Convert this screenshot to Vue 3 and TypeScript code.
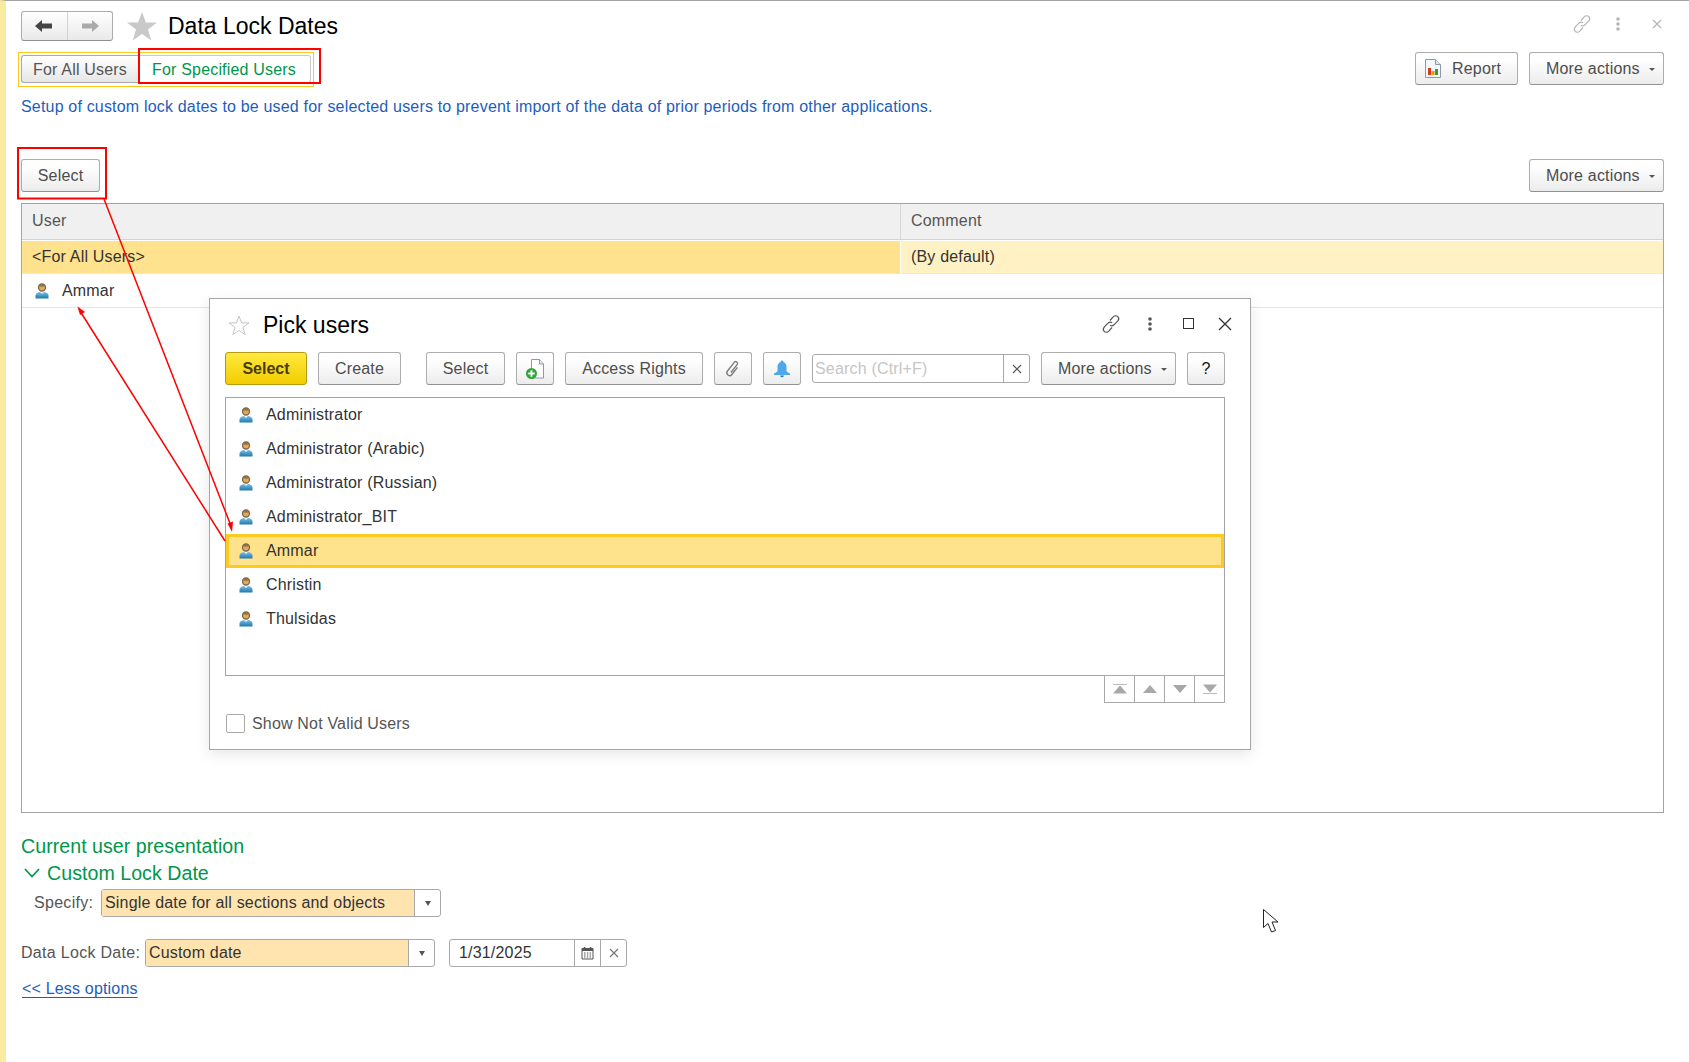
<template>
  <div class="page">
    <svg class="sprites" width="0" height="0">
      <defs>
        <linearGradient id="shoulder" x1="0" y1="0" x2="0" y2="1">
          <stop offset="0" stop-color="#7cc0e4" />
          <stop offset="1" stop-color="#1f78ac" />
        </linearGradient>
        <symbol id="user" viewBox="0 0 14 16">
          <path d="M0.500 15.500v-3c0-2 2-3 4-3.600h5c2 .6 4 1.600 4 3.600v3z" fill="url(#shoulder)" />
          <path d="M4.800 8.800L7 11l2.200-2.200z" fill="#f2f7fa" />
          <circle cx="7" cy="4.500" r="3.500" fill="#eda650" stroke="#74684c" stroke-width="1.300" />
          <path d="M4.200 3.200c1-1.300 4.600-1.300 5.600 0-1.600.5-4 .5-5.600 0z" fill="#6d6046" />
        </symbol>
        <symbol id="link" viewBox="0 0 20 20">
          <g fill="none" stroke="currentColor" stroke-width="1.200">
            <path d="M9 6.500l3.200-3.600c1.400-1.400 3.400-1.500 4.600-.3s1.100 3.100-.2 4.500l-3.600 3.700c-1.300 1.200-3 1.300-4.100.3" />
            <path d="M11 13.500l-3.200 3.600c-1.400 1.400-3.400 1.500-4.600.3s-1.100-3.100.2-4.500l3.600-3.700c1.300-1.200 3-1.300 4.100-.3" />
          </g>
        </symbol>
        <symbol id="dots" viewBox="0 0 8 14">
          <circle cx="4" cy="2" r="1.800" fill="currentColor" />
          <circle cx="4" cy="7" r="1.800" fill="currentColor" />
          <circle cx="4" cy="12" r="1.800" fill="currentColor" />
        </symbol>
      </defs>
    </svg>

    <header class="head">
      <div class="nav">
        <button class="nav-btn">
          <svg width="18" height="14" viewBox="0 0 18 14"><path d="M0 7l7-6v3.500h10v5H7V13z" fill="#444" /></svg>
        </button>
        <button class="nav-btn">
          <svg width="18" height="14" viewBox="0 0 18 14"><path d="M18 7l-7-6v3.500H1v5h10V13z" fill="#aaa" /></svg>
        </button>
      </div>
      <svg class="big-star" width="30" height="29" viewBox="0 0 30 29">
        <path d="M15 0l3.900 10.600H30l-9 6.800 3.300 11.200L15 22l-9.300 6.600L9 17.400 0 10.600h11.100z" fill="#c9c9c9" />
      </svg>
      <h1 class="title">Data Lock Dates</h1>
      <div class="head-icons">
        <svg class="ico-link" width="20" height="20"><use href="#link" /></svg>
        <svg class="ico-dots" width="8" height="14"><use href="#dots" /></svg>
        <svg class="ico-x" width="10" height="10" viewBox="0 0 10 10">
          <path d="M1 1l8 8M9 1l-8 8" stroke="#b5b5b5" stroke-width="1.300" />
        </svg>
      </div>
    </header>

    <div class="tab-row">
      <div class="tabs">
        <div class="tab">For All Users</div>
        <div class="tab active">For Specified Users</div>
      </div>
      <div class="right-btns">
        <button class="btn report">
          <svg width="16" height="19" viewBox="0 0 16 19">
            <path d="M.5.5h10l5 5v13H.5z" fill="#f4f7f9" stroke="#8b9aa8" />
            <path d="M10.500.5v5h5" fill="#dfe6ea" stroke="#8b9aa8" />
            <rect x="3" y="9" width="3" height="7" fill="#d9381e" />
            <rect x="6.500" y="12" width="3" height="4" fill="#e09a20" />
            <rect x="10" y="10" width="3" height="6" fill="#3a9a2e" />
          </svg>
          <span>Report</span>
        </button>
        <button class="btn more">More actions<i class="caret"></i></button>
      </div>
    </div>

    <p class="desc">
      Setup of custom lock dates to be used for selected users to prevent import of the data of prior periods from other applications.
    </p>

    <div class="cmd-row">
      <button class="btn select-main">Select</button>
      <button class="btn more">More actions<i class="caret"></i></button>
    </div>

    <div class="table">
      <div class="t-row t-head">
        <div class="cell c1">User</div>
        <div class="cell">Comment</div>
      </div>
      <div class="t-row t-sel">
        <div class="cell c1">&lt;For All Users&gt;</div>
        <div class="cell">(By default)</div>
      </div>
      <div class="t-row t-plain">
        <div class="cell c1 user-cell">
          <svg class="user-ico" width="14" height="16"><use href="#user" /></svg>
          Ammar
        </div>
        <div class="cell"></div>
      </div>
    </div>

    <h2 class="green-head">Current user presentation</h2>
    <div class="group-head">
      <svg width="16" height="10" viewBox="0 0 16 10">
        <path d="M1 1l7 7.500L15 1" fill="none" stroke="#00944a" stroke-width="1.600" />
      </svg>
      <span>Custom Lock Date</span>
    </div>

    <div class="form-row specify">
      <label>Specify:</label>
      <div class="combo wide">
        <div class="combo-val">Single date for all sections and objects</div>
        <div class="combo-btn"><i class="caret dark"></i></div>
      </div>
    </div>

    <div class="form-row lock">
      <label>Data Lock Date:</label>
      <div class="combo narrow">
        <div class="combo-val">Custom date</div>
        <div class="combo-btn"><i class="caret dark"></i></div>
      </div>
      <div class="combo date">
        <div class="date-val">1/31/2025</div>
        <div class="combo-btn">
          <svg width="13" height="14" viewBox="0 0 13 14">
            <path d="M1 2.500h11V13H1z" fill="#fff" stroke="#555" />
            <path d="M1 2h11v3H1z" fill="#555" />
            <path d="M3.500 1v2M9.500 1v2" stroke="#555" stroke-width="1.500" />
            <path d="M3 7h1.500M5.800 7h1.500M8.600 7h1.500M3 9h1.500M5.800 9h1.500M8.600 9h1.500M3 11h1.500M5.800 11h1.500M8.600 11h1.500" stroke="#555" />
          </svg>
        </div>
        <div class="combo-btn">
          <svg width="10" height="10" viewBox="0 0 10 10"><path d="M1 1l8 8M9 1l-8 8" stroke="#777" stroke-width="1.200" /></svg>
        </div>
      </div>
    </div>

    <a class="less">&lt;&lt; Less options</a>

    <section class="dialog">
      <div class="dlg-title">
        <svg width="22" height="21" viewBox="0 0 22 21">
          <path d="M11 1l2.600 6.900H21l-6 4.500 2.200 7.300L11 15.400 4.800 19.700 7 12.400 1 7.900h7.400z" fill="#fff" stroke="#c4c4c4" />
        </svg>
        <span class="dlg-name">Pick users</span>
        <div class="dlg-icons">
          <svg class="d-link" width="20" height="20"><use href="#link" /></svg>
          <svg class="d-dots" width="8" height="14"><use href="#dots" /></svg>
          <span class="d-max"></span>
          <svg width="14" height="14" viewBox="0 0 14 14">
            <path d="M1 1l12 12M13 1L1 13" stroke="#333" stroke-width="1.300" />
          </svg>
        </div>
      </div>

      <div class="toolbar">
        <button class="btn primary">Select</button>
        <button class="btn create">Create</button>
        <button class="btn gap-left">Select</button>
        <button class="btn square">
          <svg width="20" height="22" viewBox="0 0 20 22">
            <path d="M6.500 1.500h8l4 4.500v14h-12z" fill="#fff" stroke="#8b9aa8" />
            <path d="M14.500 1.500V6h4" fill="#e4eaee" stroke="#8b9aa8" />
            <circle cx="6.500" cy="15.500" r="5.500" fill="#2fa63c" />
            <path d="M6.500 12.300v6.400M3.300 15.500h6.400" stroke="#fff" stroke-width="1.900" />
          </svg>
        </button>
        <button class="btn rights">Access Rights</button>
        <button class="btn square">
          <svg width="18" height="20" viewBox="0 0 18 20">
            <path transform="rotate(38 9 10)" d="M11.500 6v9a2.800 2.800 0 0 1-5.600 0V4a1.800 1.800 0 0 1 3.600 0v10" fill="none" stroke="#7d7d7d" stroke-width="1.400" />
          </svg>
        </button>
        <button class="btn square">
          <svg width="18" height="20" viewBox="0 0 18 20">
            <path d="M9 1.500c.9 0 1.400.6 1.400 1.400 2.200.7 3.100 2.600 3.100 5.100v3.500c0 1.300 1 2 3.500 3V16H1v-1.500c2.500-1 3.500-1.700 3.500-3V8c0-2.500.9-4.400 3.100-5.100 0-.8.5-1.400 1.400-1.400z" fill="#4ea8ea" />
            <path d="M7 16.500c.3 1.200 1 1.800 2 1.800s1.700-.6 2-1.800z" fill="#2e78b0" />
          </svg>
        </button>
        <div class="search">
          <div class="search-text">Search (Ctrl+F)</div>
          <div class="search-x">
            <svg width="10" height="10" viewBox="0 0 10 10"><path d="M1 1l8 8M9 1l-8 8" stroke="#555" stroke-width="1.200" /></svg>
          </div>
        </div>
        <button class="btn more tb-more">More actions<i class="caret"></i></button>
        <button class="btn help">?</button>
      </div>

      <ul class="list">
        <li v-for="name in users" :key="name" :class="{ picked: name === picked }">
          <svg class="user-ico" width="14" height="16"><use href="#user" /></svg>
          {{ name }}
        </li>
      </ul>

      <div class="pager">
        <div class="pg">
          <svg width="14" height="10" viewBox="0 0 14 10"><path d="M0 .5h14" stroke="#bbb" /><path d="M7 1.500L14 9.500H0z" fill="#a8a8a8" /></svg>
        </div>
        <div class="pg">
          <svg width="14" height="8" viewBox="0 0 14 8"><path d="M7 0l7 8H0z" fill="#a8a8a8" /></svg>
        </div>
        <div class="pg">
          <svg width="14" height="8" viewBox="0 0 14 8"><path d="M7 8l7-8H0z" fill="#a8a8a8" /></svg>
        </div>
        <div class="pg">
          <svg width="14" height="10" viewBox="0 0 14 10"><path d="M0 9.500h14" stroke="#bbb" /><path d="M7 8.500L14 .5H0z" fill="#a8a8a8" /></svg>
        </div>
      </div>

      <div class="check-row">
        <span class="check"></span>
        <span>Show Not Valid Users</span>
      </div>
    </section>

    <!-- red marks somebody drew on top of the screenshot -->
    <svg class="marks" width="1689" height="1062" viewBox="0 0 1689 1062">
      <rect x="18.500" y="52.500" width="295" height="34" fill="none" stroke="#fcc81e" stroke-width="1" />
      <rect x="139" y="49" width="181" height="34" fill="none" stroke="#f00" stroke-width="2" />
      <rect x="18" y="148" width="88" height="50.500" fill="none" stroke="#f00" stroke-width="2" />
      <path d="M104 199L231 526" stroke="#f00" stroke-width="1.500" />
      <path d="M232 532l-4.500-8.500 5.500-2z" fill="#f00" />
      <path d="M225 541L80 311" stroke="#f00" stroke-width="1.500" />
      <path d="M77.500 306.500l7.500 5.500-5 3z" fill="#f00" />
      <path d="M1263.500 909.500v18l4.500-4 3.500 8.500 4-1.500-3.500-8.500h6z" fill="#fff" stroke="#222" />
    </svg>
  </div>
</template>

<script setup lang="ts">
const users: string[] = [
  "Administrator",
  "Administrator (Arabic)",
  "Administrator (Russian)",
  "Administrator_BIT",
  "Ammar",
  "Christin",
  "Thulsidas",
];
const picked = "Ammar";
</script>

<style>
html,
body {
  margin: 0;
  background: #fff;
}
</style>

<style scoped>
.page {
  position: relative;
  box-sizing: border-box;
  width: 1689px;
  height: 1062px;
  overflow: hidden;
  padding: 10px 25px 0 15px;
  background: #fff;
  border-top: 1px solid #a3a3a3;
  border-left: 6px solid #f9eb9f;
  font-family: "Liberation Sans", Arial, sans-serif;
  font-size: 16px;
  letter-spacing: 0.18px;
  color: #333;
}
.sprites {
  position: absolute;
}
button {
  font-family: inherit;
  font-size: 16px;
  letter-spacing: inherit;
}
.head {
  display: flex;
  align-items: center;
  height: 30px;
}
.nav {
  display: flex;
  width: 92px;
  height: 30px;
  box-sizing: border-box;
  border: 1px solid #acacac;
  border-bottom-color: #8f8f8f;
  border-radius: 3px;
  overflow: hidden;
  background: linear-gradient(#fff, #e9e9e9);
}
.nav-btn {
  flex: 1;
  border: 0;
  padding: 0;
  background: transparent;
  display: flex;
  align-items: center;
  justify-content: center;
}
.nav-btn + .nav-btn {
  border-left: 1px solid #d0d0d0;
}
.big-star {
  margin-left: 14px;
}
.title {
  margin: 0 0 0 11px;
  font-size: 23px;
  font-weight: 400;
  letter-spacing: 0;
  color: #000;
}
.head-icons {
  margin-left: auto;
  margin-right: 2px;
  margin-bottom: 4px;
  display: flex;
  align-items: center;
  color: #b5b5b5;
}
.ico-link {
  margin-right: 22px;
}
.ico-dots {
  margin-right: 30px;
}
.tab-row {
  display: flex;
  align-items: center;
  justify-content: space-between;
  height: 33px;
  margin-top: 11px;
}
.tabs {
  display: flex;
  height: 28px;
}
.tab {
  width: 117px;
  box-sizing: border-box;
  border: 1px solid #a9a9a9;
  border-right: 0;
  border-radius: 3px 0 0 3px;
  background: linear-gradient(#fff, #e6e6e6);
  color: #555;
  line-height: 28px;
  text-align: center;
}
.tab.active {
  width: 173px;
  border: 1px solid #c9c9c9;
  border-left: 0;
  border-radius: 0 3px 3px 0;
  background: #fff;
  color: #00964a;
}
.right-btns {
  display: flex;
  gap: 11px;
}
.btn {
  height: 33px;
  box-sizing: border-box;
  padding: 0 16px;
  border: 1px solid #adadad;
  border-bottom-color: #919191;
  border-radius: 3px;
  background: linear-gradient(#fff 20%, #ececec);
  color: #4d4d4d;
  white-space: nowrap;
}
.report {
  width: 103px;
  padding: 0 0 0 9px;
  display: flex;
  align-items: center;
  gap: 11px;
}
.more {
  width: 135px;
  padding: 0 0 0 16px;
  text-align: left;
  position: relative;
}
.caret {
  position: absolute;
  right: 8px;
  top: 15px;
  border: 3px solid transparent;
  border-top: 3px solid #555;
  border-bottom: 0;
}
.caret.dark {
  position: static;
  display: block;
  border-width: 5px 3.500px 0;
  border-top-color: #555;
}
.desc {
  margin: 12px 0 0;
  line-height: 20px;
  color: #1c5ebd;
}
.cmd-row {
  display: flex;
  justify-content: space-between;
  margin-top: 42px;
}
.select-main {
  width: 79px;
  padding: 0;
}
.table {
  box-sizing: border-box;
  height: 610px;
  margin-top: 11px;
  border: 1px solid #a3a3a3;
}
.t-row {
  display: grid;
  grid-template-columns: 879px 1fr;
}
.cell {
  padding-left: 10px;
  display: flex;
  align-items: center;
}
.t-head {
  height: 35px;
  background: #f0f0f0;
  color: #555;
  border-bottom: 1px solid #d4d4d4;
}
.t-head .cell {
  padding-bottom: 2px;
}
.t-head .c1 {
  border-right: 1px solid #d8d8d8;
}
.t-sel {
  height: 32px;
  margin-top: 1px;
  background: #fef1c4;
}
.t-sel .c1 {
  background: #fee28e;
  border-right: 1px solid #fff;
}
.t-plain {
  height: 33px;
  border-top: 1px solid #e8e8e8;
  border-bottom: 1px solid #e4e4e4;
  box-sizing: content-box;
}
.user-cell {
  padding-left: 13px;
}
.user-ico {
  margin-right: 13px;
  flex: none;
}
.green-head {
  margin: 21px 0 0;
  font-size: 19.600px;
  font-weight: 400;
  line-height: 24px;
  letter-spacing: 0.04px;
  color: #00964a;
}
.group-head {
  display: flex;
  align-items: center;
  gap: 7px;
  height: 24px;
  margin: 3px 0 0 2px;
  padding-left: 1px;
  font-size: 19.600px;
  letter-spacing: 0.04px;
  color: #00964a;
}
.form-row {
  display: flex;
  align-items: center;
  gap: 7px;
  height: 28px;
}
.form-row label {
  color: #555;
  white-space: nowrap;
  letter-spacing: 0.3px;
}
.specify {
  margin-top: 4px;
  padding-left: 13px;
}
.specify label {
  width: 60px;
}
.lock {
  margin-top: 22px;
}
.lock label {
  width: 117px;
}
.combo {
  display: flex;
  height: 28px;
  box-sizing: border-box;
  border: 1px solid #a9a9a9;
  border-radius: 3px;
  overflow: hidden;
}
.wide {
  width: 340px;
}
.narrow {
  width: 290px;
}
.date {
  width: 178px;
  margin-left: 7px;
}
.combo-val {
  flex: 1;
  padding-left: 3px;
  line-height: 26px;
  background: #ffe4b0;
}
.date-val {
  flex: 1;
  padding-left: 9px;
  line-height: 26px;
}
.combo-btn {
  width: 25px;
  flex: none;
  border-left: 1px solid #a9a9a9;
  display: flex;
  align-items: center;
  justify-content: center;
}
.less {
  display: inline-block;
  margin: 12px 0 0 1px;
  line-height: 20px;
  color: #1c5ebd;
  text-decoration: underline;
  text-underline-offset: 3px;
}
.dialog {
  position: absolute;
  left: 203px;
  top: 297px;
  box-sizing: border-box;
  width: 1042px;
  height: 452px;
  padding: 0 25px 0 15px;
  background: #fff;
  border: 1px solid #a6a6a6;
  box-shadow: 0 4px 14px rgba(0, 0, 0, 0.1);
}
.dlg-title {
  display: flex;
  align-items: center;
  height: 53px;
  padding-left: 3px;
}
.dlg-name {
  margin-left: 13px;
  font-size: 23px;
  letter-spacing: 0;
  color: #000;
}
.dlg-icons {
  margin-left: auto;
  margin-right: -7px;
  margin-bottom: 4px;
  display: flex;
  align-items: center;
  color: #555;
}
.d-link {
  margin-right: 25px;
}
.d-dots {
  margin-right: 29px;
}
.d-max {
  width: 11px;
  height: 11px;
  box-sizing: border-box;
  border: 1px solid #333;
  margin-right: 24px;
}
.toolbar {
  display: flex;
  align-items: center;
  gap: 11px;
}
.primary {
  width: 82px;
  padding: 0;
  background: linear-gradient(#ffe93e, #f2cd00);
  border-color: #b89a10;
  color: #4a3c00;
  font-weight: 700;
  letter-spacing: 0;
}
.create {
  width: 83px;
  padding: 0;
}
.gap-left {
  width: 79px;
  padding: 0;
  margin-left: 14px;
}
.rights {
  width: 138px;
  padding: 0;
}
.square {
  width: 38px;
  padding: 0;
  display: flex;
  align-items: center;
  justify-content: center;
}
.search {
  display: flex;
  width: 218px;
  height: 29px;
  box-sizing: border-box;
  border: 1px solid #a9a9a9;
  border-radius: 3px;
}
.search-text {
  flex: 1;
  padding-left: 2px;
  line-height: 27px;
  color: #c6c6c6;
}
.search-x {
  width: 25px;
  border-left: 1px solid #a9a9a9;
  display: flex;
  align-items: center;
  justify-content: center;
}
.help {
  width: 38px;
  padding: 0;
  color: #111;
}
.list {
  list-style: none;
  box-sizing: border-box;
  height: 279px;
  margin: 12px 0 0;
  padding: 0;
  border: 1px solid #a3a3a3;
}
.list li {
  display: flex;
  align-items: center;
  height: 34px;
  box-sizing: border-box;
  padding-left: 13px;
}
.list li.picked {
  background: #ffe28c;
  border: 3px solid #fdca22;
  padding-left: 10px;
}
.pager {
  display: flex;
  justify-content: flex-end;
  margin-top: -1px;
}
.pg {
  width: 31px;
  height: 28px;
  box-sizing: border-box;
  border: 1px solid #a9a9a9;
  margin-left: -1px;
  display: flex;
  align-items: center;
  justify-content: center;
}
.check-row {
  display: flex;
  align-items: center;
  gap: 7px;
  margin-top: 11px;
  margin-left: 1px;
  color: #555;
}
.check {
  width: 19px;
  height: 19px;
  box-sizing: border-box;
  border: 1px solid #a9a9a9;
  border-radius: 2px;
}
.marks {
  position: absolute;
  left: -6px;
  top: -1px;
  pointer-events: none;
}
</style>
